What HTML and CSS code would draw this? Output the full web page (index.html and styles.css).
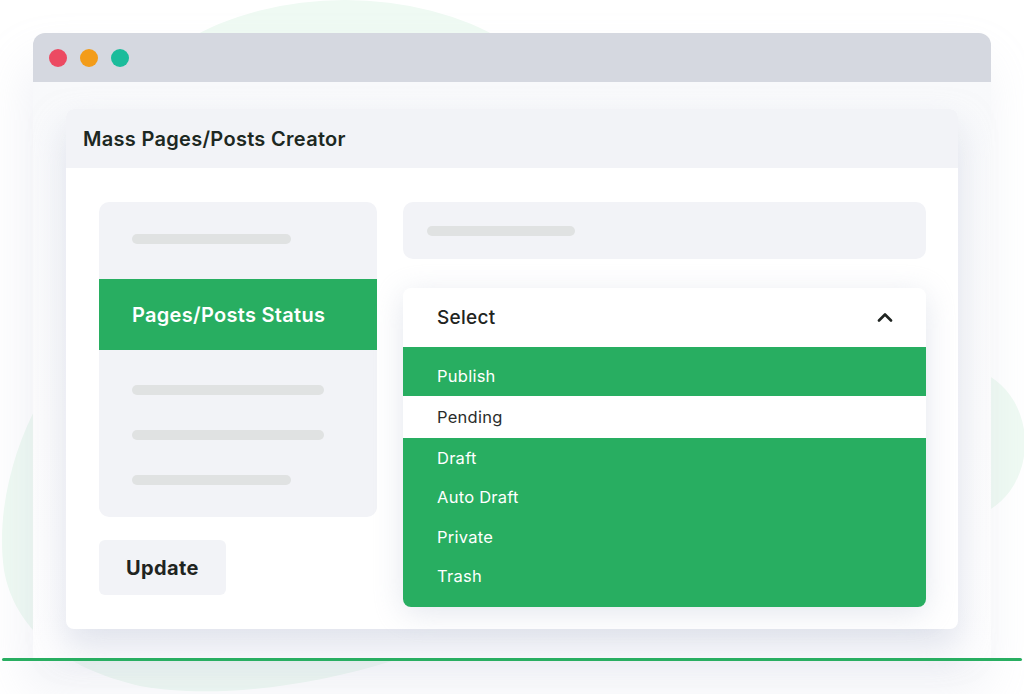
FILE: index.html
```html
<!DOCTYPE html>
<html lang="en">
<head>
<meta charset="utf-8">
<title>Mass Pages/Posts Creator</title>
<link rel="stylesheet" href="styles.css">
</head>
<body>
<svg class="blob" viewBox="0 0 1024 694" width="1024" height="694" aria-hidden="true">
  <ellipse cx="345" cy="140" rx="225" ry="140" fill="#effaf3"/>
  <ellipse cx="960" cy="443" rx="65" ry="75" fill="#effaf3"/>
  <path d="M 40 400 C 12 450 -4 515 4 570 C 14 628 62 668 140 686 C 205 698 300 690 395 660 L 395 420 Z" fill="#effaf3"/>
</svg>
<div class="stage">
  <div class="window">
    <div class="titlebar">
      <span class="dot red"></span>
      <span class="dot orange"></span>
      <span class="dot teal"></span>
    </div>
    <div class="winbody">
      <div class="card">
        <div class="card-head">Mass Pages/Posts Creator</div>
        <div class="card-body">
          <div class="left-col">
            <div class="panel">
              <div class="bar bar-160"></div>
              <div class="panel-active">Pages/Posts Status</div>
              <div class="panel-bars">
                <div class="bar bar-192"></div>
                <div class="bar bar-192"></div>
                <div class="bar bar-160"></div>
              </div>
            </div>
            <button class="update-btn">Update</button>
          </div>
          <div class="right-col">
            <div class="field">
              <div class="bar bar-148"></div>
            </div>
            <div class="dropdown">
              <div class="dd-head">
                <span>Select</span>
                <svg class="chev" width="16" height="10" viewBox="0 0 16 10"><polyline points="2,8.5 8,2.5 14,8.5" fill="none" stroke="#1f2421" stroke-width="2.6" stroke-linecap="round" stroke-linejoin="round"/></svg>
              </div>
              <ul class="dd-list">
                <li class="opt opt-first">Publish</li>
                <li class="opt opt-hover">Pending</li>
                <li class="opt">Draft</li>
                <li class="opt">Auto Draft</li>
                <li class="opt">Private</li>
                <li class="opt opt-last">Trash</li>
              </ul>
            </div>
          </div>
        </div>
      </div>
    </div>
  </div>
  <div class="baseline"></div>
</div>
</body>
</html>
```
FILE: styles.css
```css
* { box-sizing: border-box; }
html, body {
  margin: 0;
  padding: 0;
  width: 1024px;
  height: 694px;
  overflow: hidden;
  background: #ffffff;
  font-family: "Inter", "Noto Sans", sans-serif;
}
body { position: relative; }
.blob {
  position: absolute;
  left: 0;
  top: 0;
  z-index: 0;
}
.stage {
  position: relative;
  z-index: 1;
  padding-top: 33px;
}
.window {
  margin-left: 33px;
  width: 958px;
  box-shadow: -6px 30px 50px rgba(185, 192, 212, 0.22);
  border-radius: 12px 12px 0 0;
}
.titlebar {
  height: 49px;
  background: #d5d8e0;
  border-radius: 12px 12px 0 0;
  display: flex;
  align-items: center;
  gap: 13px;
  padding-left: 16px;
}
.dot {
  width: 18px;
  height: 18px;
  border-radius: 50%;
  display: block;
}
.dot.red { background: #ec4a62; }
.dot.orange { background: #f39c19; }
.dot.teal { background: #1bbc9b; }
.winbody {
  background: linear-gradient(to bottom, #f8f9fb 0%, #fbfbfc 60%, #fdfdfe 100%);
  padding: 27px 33px 32px 33px;
  height: 577px;
}
.card {
  background: #ffffff;
  border-radius: 8px;
  box-shadow: 0 18px 34px rgba(200, 206, 222, 0.55);
}
.card-head {
  height: 59px;
  background: #f2f3f7;
  border-radius: 8px 8px 0 0;
  padding-left: 17px;
  display: flex;
  align-items: center;
  font-size: 20px;
  font-weight: 600;
  color: #1d2822;
  letter-spacing: 0.3px;
}
.card-body {
  display: grid;
  grid-template-columns: 278px 523px;
  column-gap: 26px;
  padding: 34px 32px 22px 33px;
}
.left-col {
  display: flex;
  flex-direction: column;
  align-items: flex-start;
  gap: 23px;
}
.panel {
  width: 278px;
  height: 315px;
  background: #f2f3f7;
  border-radius: 10px;
  padding-top: 32px;
}
.bar {
  height: 10px;
  border-radius: 5px;
  background: #e0e2e2;
  margin-left: 33px;
}
.bar-160 { width: 159px; }
.bar-192 { width: 192px; }
.bar-148 { width: 148px; margin-left: 24px; }
.panel-active {
  margin-top: 35px;
  height: 71px;
  background: #28ae61;
  color: #ffffff;
  font-size: 20px;
  font-weight: 600;
  display: flex;
  align-items: center;
  padding-left: 33px;
  letter-spacing: 0.3px;
}
.panel-bars {
  margin-top: 35px;
  display: flex;
  flex-direction: column;
  gap: 35px;
}
.update-btn {
  width: 127px;
  height: 55px;
  border: 0;
  border-radius: 6px;
  background: #f2f3f7;
  font-family: inherit;
  font-size: 20px;
  font-weight: 700;
  color: #1f2421;
  letter-spacing: 0.4px;
  padding: 0;
  cursor: pointer;
}
.right-col {
  display: flex;
  flex-direction: column;
  gap: 29px;
}
.field {
  height: 57px;
  background: #f2f3f7;
  border-radius: 10px;
  display: flex;
  align-items: center;
}
.dropdown {
  background: #ffffff;
  border-radius: 8px;
  box-shadow: 0 6px 30px rgba(196, 202, 218, 0.45);
  overflow: hidden;
}
.dd-head {
  height: 59px;
  display: flex;
  align-items: center;
  justify-content: space-between;
  padding: 0 33px 0 34px;
  font-size: 19px;
  font-weight: 500;
  color: #1f2421;
  letter-spacing: 0.3px;
}
.chev { display: block; margin-top: -2px; }
.dd-list {
  list-style: none;
  margin: 0;
  padding: 0;
  background: #28ae61;
}
.opt {
  height: 39.6px;
  display: flex;
  align-items: center;
  padding-left: 34px;
  font-size: 16.5px;
  color: #ffffff;
  letter-spacing: 0.25px;
}
.opt-first {
  height: 48.5px;
  padding-top: 9px;
}
.opt-hover {
  height: 42.5px;
  background: #ffffff;
  color: #2a2d2b;
}
.opt-last {
  height: 50px;
  padding-bottom: 11px;
}
.baseline {
  margin-left: 2px;
  margin-top: -1px;
  width: 1020px;
  height: 3px;
  border-radius: 2px;
  background: #28ae61;
}
```
